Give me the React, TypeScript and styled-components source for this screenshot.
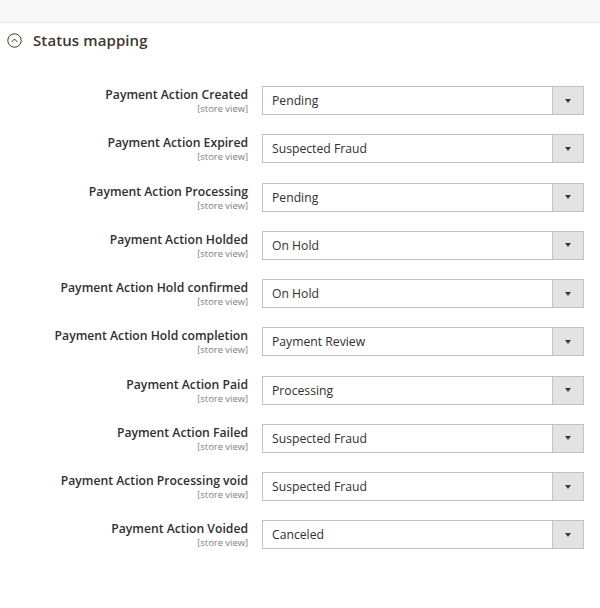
import React from "react";
import styled, { createGlobalStyle } from "styled-components";

const Global = createGlobalStyle`
  html, body { margin: 0; padding: 0; background: #ffffff; }
  body { font-family: "Open Sans", "Liberation Sans", sans-serif; color: #303030; }
  * { box-sizing: border-box; }
`;

const Page = styled.div`
  width: 600px;
  height: 608px;
  background: #ffffff;
  overflow: hidden;
`;

const TopBand = styled.div`
  height: 23px;
  background: #f8f8f8;
  border-bottom: 1px solid #e6e6e6;
`;

const SectionHeader = styled.div`
  display: flex;
  align-items: center;
  gap: 11px;
  padding: 0 0 0 7px;
  height: 34px;
`;

const Title = styled.span`
  font-size: 15px;
  font-weight: 600;
  color: #41362f;
  letter-spacing: 0.1px;
`;

const Rows = styled.div`
  display: flex;
  flex-direction: column;
  gap: 19.25px;
  padding-top: 29px;
`;

const Row = styled.div`
  display: grid;
  grid-template-columns: 248px 322px;
  grid-template-rows: 29px;
  height: 29px;
  column-gap: 14px;
  align-items: start;
`;

const LabelCol = styled.div`
  display: flex;
  flex-direction: column;
  align-items: flex-end;
  text-align: right;
`;

const LabelText = styled.span`
  font-size: 12.2px;
  font-weight: 600;
  color: #303030;
  line-height: 17px;
`;

const Scope = styled.span`
  font-size: 9.4px;
  color: #808080;
  line-height: 12px;
`;

const Select = styled.div`
  display: flex;
  height: 29px;
  border: 1px solid #c2c2c2;
  background: #ffffff;
`;

const Value = styled.div`
  flex: 1;
  display: flex;
  align-items: center;
  padding-left: 9px;
  font-size: 12.2px;
  color: #303030;
`;

const Toggle = styled.div`
  width: 31px;
  display: flex;
  align-items: center;
  justify-content: center;
  background: #e3e3e3;
  border-left: 1px solid #c2c2c2;
`;

const Arrow = styled.span`
  width: 0;
  height: 0;
  border-left: 3.5px solid transparent;
  border-right: 3.5px solid transparent;
  border-top: 4px solid #41362f;
`;

const rows: [string, string][] = [
  ["Payment Action Created", "Pending"],
  ["Payment Action Expired", "Suspected Fraud"],
  ["Payment Action Processing", "Pending"],
  ["Payment Action Holded", "On Hold"],
  ["Payment Action Hold confirmed", "On Hold"],
  ["Payment Action Hold completion", "Payment Review"],
  ["Payment Action Paid", "Processing"],
  ["Payment Action Failed", "Suspected Fraud"],
  ["Payment Action Processing void", "Suspected Fraud"],
  ["Payment Action Voided", "Canceled"],
];

export default function App() {
  return (
    <Page>
      <Global />
      <TopBand />
      <SectionHeader>
        <svg width="15" height="15" viewBox="0 0 15 15">
          <circle cx="7.5" cy="7.5" r="6.7" fill="none" stroke="#41362f" strokeWidth="1" />
          <path d="M4.6 9 L7.5 6 L10.4 9" fill="none" stroke="#41362f" strokeWidth="1" />
        </svg>
        <Title>Status mapping</Title>
      </SectionHeader>
      <Rows>
        {rows.map(([label, value]) => (
          <Row key={label}>
            <LabelCol>
              <LabelText>{label}</LabelText>
              <Scope>[store view]</Scope>
            </LabelCol>
            <Select>
              <Value>{value}</Value>
              <Toggle>
                <Arrow />
              </Toggle>
            </Select>
          </Row>
        ))}
      </Rows>
    </Page>
  );
}
